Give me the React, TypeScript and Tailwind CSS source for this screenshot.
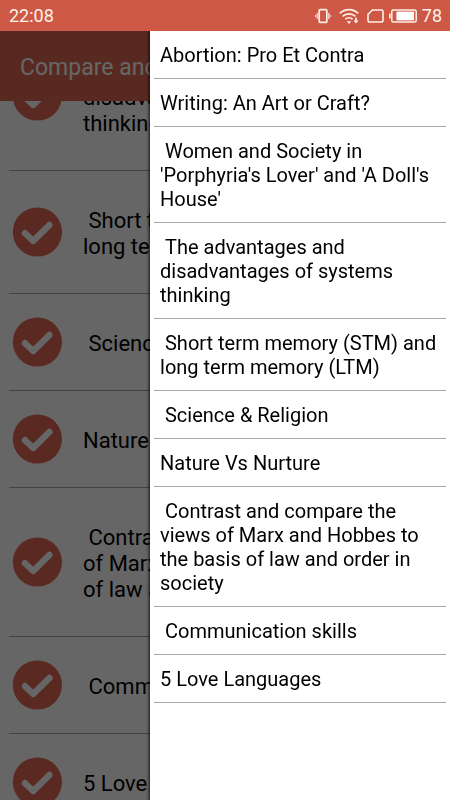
import { useEffect, useRef } from "react";

const topics = [
  "Abortion: Pro Et Contra",
  "Writing: An Art or Craft?",
  " Women and Society in 'Porphyria's Lover' and 'A Doll's House'",
  " The advantages and disadvantages of systems thinking",
  " Short term memory (STM) and long term memory (LTM)",
  " Science & Religion",
  "Nature Vs Nurture",
  " Contrast and compare the views of Marx and Hobbes to the basis of law and order in society",
  " Communication skills",
  "5 Love Languages",
];

function VibrateIcon() {
  return (
    <svg width="16" height="16" viewBox="0 0 16 16" fill="none" stroke="currentColor" aria-hidden="true">
      <rect x="4.2" y="1.6" width="7.6" height="12.8" rx="1" strokeWidth="1.7" />
      <path d="M2.2 5v6M13.8 5v6" strokeWidth="1.1" />
      <path d="M.6 7v2M15.4 7v2" strokeWidth="1" />
    </svg>
  );
}

function WifiIcon() {
  return (
    <svg width="20" height="16" viewBox="0 0 20 16" fill="none" stroke="currentColor" aria-hidden="true">
      <path d="M.8 5.4c5.2-5 13.2-5 18.4 0" strokeWidth="1.7" />
      <path d="M3.6 8.4c3.6-3.4 9.2-3.4 12.8 0" strokeWidth="1.7" />
      <path d="M6.4 11.2c2-1.9 5.2-1.9 7.2 0" strokeWidth="1.7" />
      <path d="M7.8 13.2h4.4L10 16z" fill="currentColor" stroke="none" />
      <path d="M17 9.8v3" strokeWidth="1.8" />
      <path d="M14.4 12.4h5.2L17 15.6z" fill="currentColor" stroke="none" />
    </svg>
  );
}

function SimIcon() {
  return (
    <svg width="17" height="14" viewBox="0 0 17 14" fill="none" stroke="currentColor" aria-hidden="true">
      <path d="M5.4 1h9.2A1.4 1.4 0 0 1 16 2.4v9.2a1.4 1.4 0 0 1-1.4 1.4H2.4A1.4 1.4 0 0 1 1 11.6V5.4z" strokeWidth="1.6" />
    </svg>
  );
}

function BatteryIcon() {
  return (
    <svg width="28" height="14" viewBox="0 0 28 14" fill="none" stroke="currentColor" aria-hidden="true">
      <rect x="2.8" y=".9" width="24.4" height="12.2" rx="1.6" strokeWidth="1.5" />
      <path d="M.8 4.4v5.2" strokeWidth="1.6" />
      <rect x="7.4" y="2.6" width="17.6" height="8.8" fill="#fff" stroke="none" />
    </svg>
  );
}

function CheckBadge() {
  return (
    <svg className="shrink-0" width="50" height="50" viewBox="0 0 50 50" fill="none" aria-hidden="true">
      <circle cx="25.4" cy="25" r="24.6" fill="#e26a55" />
      <path d="M13 26.2 21.2 34 37.4 18" stroke="#fff" strokeWidth="6.4" strokeLinecap="round" strokeLinejoin="round" />
    </svg>
  );
}

function StatusBar() {
  return (
    <header className="flex h-[31px] shrink-0 items-center justify-between bg-[#cd5846] pl-[9px] pr-2 text-lg text-[#fff0e8]">
      <span>22:08</span>
      <div className="flex items-center gap-[5px]">
        <div className="flex items-center gap-2">
          <VibrateIcon />
          <WifiIcon />
          <SimIcon />
        </div>
        <BatteryIcon />
        <span>78</span>
      </div>
    </header>
  );
}

function TopicList() {
  const scroller = useRef<HTMLUListElement>(null);

  // open part-way down, with the fourth topic sliding under the title bar
  useEffect(() => {
    const list = scroller.current;
    const row = list?.children[3] as HTMLElement | undefined;
    if (list && row) list.scrollTop = row.offsetTop - list.offsetTop + 79;
  }, []);

  return (
    <ul ref={scroller} className="min-h-0 flex-1 overflow-y-auto bg-white px-[9px] [scrollbar-width:none]">
      {topics.map((topic) => (
        <li
          key={topic}
          className="flex items-center gap-[21px] border-b border-[#a8a8a8] py-[23px] pl-[3px] pr-8 text-[22px] leading-[26px]"
        >
          <CheckBadge />
          <span className="whitespace-pre-wrap pb-2.5 pt-3.5">{topic}</span>
        </li>
      ))}
    </ul>
  );
}

function Drawer() {
  return (
    <nav className="absolute inset-y-0 right-0 w-2/3 overflow-y-auto bg-white px-1 shadow-[0_0_3px_1px_rgba(0,0,0,0.8)] [scrollbar-width:none]">
      {topics.map((topic) => (
        <a
          key={topic}
          href="#"
          className="block whitespace-pre-wrap border-b border-[#a8a8a8] px-1.5 pb-[11px] pt-3 text-xl leading-6"
        >
          {topic}
        </a>
      ))}
    </nav>
  );
}

export default function App() {
  return (
    <div className="flex h-screen flex-col overflow-hidden font-[Roboto,sans-serif] text-black">
      <StatusBar />
      <div className="relative flex min-h-0 flex-1 flex-col overflow-hidden">
        <div className="flex h-[70px] shrink-0 items-center bg-[#db6753] px-5">
          <h1 className="truncate pt-1 text-[23px] text-white">Compare and Contrast Essays</h1>
        </div>
        <TopicList />
        <div className="absolute inset-0 bg-black/60" />
        <Drawer />
      </div>
    </div>
  );
}
